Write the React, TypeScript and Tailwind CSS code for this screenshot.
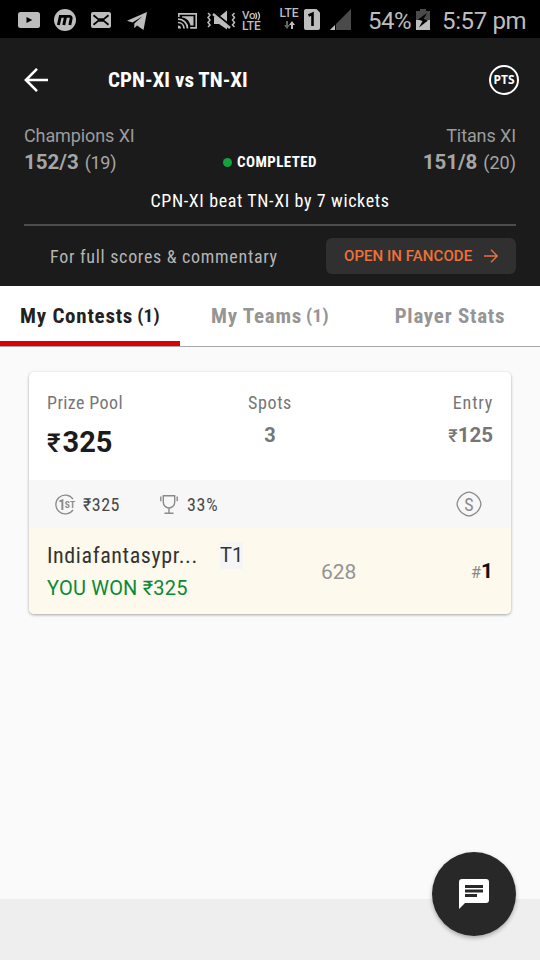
import React from 'react';
import clsx from 'clsx';

const tabs = [
  { label: 'My Contests', count: 1 },
  { label: 'My Teams', count: 1 },
  { label: 'Player Stats' }
];

function StatusBar() {
  return (
    <div className="flex h-[38px] items-start bg-black pl-[18px] text-[#bdbdbd]">
      <svg className="mt-3 h-4 w-[22px]" viewBox="0 0 22 16">
        <rect width="22" height="16" rx="2.5" fill="currentColor" />
        <path d="M8.5 5v6l5.8-3z" fill="#000" />
      </svg>
      <svg className="ml-[14px] mt-[9px] h-[22px] w-[22px]" viewBox="0 0 22 22">
        <circle cx="11" cy="11" r="11" fill="currentColor" />
        <path d="M4.4 16 6.3 7.4H15.3Q17.6 7.4 17.1 9.8L15.800 16M11.6 7.400 9.800 16" fill="none" stroke="#000" strokeWidth="2.9" />
      </svg>
      <svg className="ml-[15px] mt-3 h-4 w-5" viewBox="0 0 20 16">
        <rect width="20" height="16" rx="2" fill="currentColor" />
        <path d="M2.500 3.200 7.200 7.200h5.600L17.500 3.200M2.500 12.800 7.200 8.800h5.600l4.700 4" fill="none" stroke="#000" strokeWidth="1.8" />
      </svg>
      <svg className="ml-4 mt-3 h-[18px] w-5" viewBox="0 0 20 18">
        <path d="M20 0 0 8.800l5.600 1.700L15.500 4.200 7.300 11.600v4.600l2.700-2.600 6.500 4.400z" fill="currentColor" />
      </svg>
      <svg className="ml-[31px] mt-[13px] h-4 w-[19px]" viewBox="0 0 19 16" fill="none" stroke="currentColor">
        <path d="M.8 4V.9h17.400v14h-6" strokeWidth="1.6" />
        <path d="M4 3.300h11.500v9.200h-3C11.500 8 8.500 5 4 4.500z" fill="currentColor" stroke="none" />
        <path d="M0 6.200c5.500 0 9.500 4 9.500 9.300M0 9.500c3.500 0 6 2.600 6 6" strokeWidth="1.7" />
        <path d="M0 12.500a3 3 0 0 1 3 3H0z" fill="currentColor" stroke="none" />
      </svg>
      <svg className="ml-[10px] mt-[10px] h-[21px] w-[29px]" viewBox="0 0 29 21" fill="none" stroke="currentColor">
        <path d="M7 7h5l8-6.500v19L12 14H7z" fill="currentColor" stroke="none" />
        <path d="M6.500 2 24 16" stroke="#000" strokeWidth="2" />
        <path d="M6 4 23 18" strokeWidth="2.4" />
        <path d="m1 3 2 2-2 2.500 2 2.500-2 2.500 2 2.500-2 2M27.500 3l-2 2 2 2.500-2 2.500 2 2.500-2 2.500 2 2" strokeWidth="1.5" />
      </svg>
      <div className="ml-[6px] mt-[10px] w-[21px] whitespace-nowrap font-['Roboto'] text-[12px] font-medium leading-[11px]">
        <div className="flex h-[11px] items-center text-[11.5px]">
          <span className="tracking-[-0.2px]">Vo</span>
          <svg className="h-[10px] w-[6px]" viewBox="0 0 6 10" fill="none" stroke="currentColor" strokeWidth="1.4">
            <path d="M.5 2q2.200 3 0 6M3 .8q3 4.200 0 8.400" />
          </svg>
        </div>
        <div className="tracking-[-0.2px]">LTE</div>
      </div>
      <div className="ml-[16px] mt-2 w-5 text-center font-['Roboto'] text-[12px] font-medium leading-[11px]">
        LTE
        <svg className="mx-auto mt-[2px] h-2 w-[11px]" viewBox="0 0 11 8">
          <path d="M2 0h2v4h2L3 8 0 4h2z" fill="#666" />
          <path d="M7 8h2V4h2L8 0 5 4h2z" fill="currentColor" />
        </svg>
      </div>
      <svg className="ml-[5px] mt-[9px] h-[21px] w-4" viewBox="0 0 16 21">
        <path d="M2 0h10.500L16 3.500V19a2 2 0 0 1-2 2H2a2 2 0 0 1-2-2V2a2 2 0 0 1 2-2z" fill="currentColor" />
        <path d="M4.500 6.500 8.500 4.800v12.200" fill="none" stroke="#000" strokeWidth="2.6" />
      </svg>
      <svg className="ml-[10px] mt-[9px] h-[21px] w-[21px]" viewBox="0 0 21 21">
        <path d="M21 0v21H0z" fill="#4a4a4a" />
        <path d="M5 16v5H0z" fill="currentColor" />
        <path d="M5.500 15v6" stroke="#000" />
      </svg>
      <span className="ml-[17px] mt-[7px] w-[43px] whitespace-nowrap font-['Roboto'] text-[24px] leading-7 tracking-[-0.5px]">54%</span>
      <svg className="ml-[5px] mt-[9px] h-[21px] w-[14px]" viewBox="0 0 14 21">
        <path d="M4 0h6v2h4v9H0V2h4z" fill="#4a4a4a" />
        <path d="M0 11h14v10H0z" fill="currentColor" />
        <path d="M11 4 2 10.500l4.500 1.500L3 18.500l9-7-4.500-1.500z" fill="#000" />
      </svg>
      <span className="ml-[12px] mt-[7px] whitespace-nowrap font-['Roboto'] text-[24px] leading-7 tracking-[-0.35px]">5:57 pm</span>
    </div>
  );
}

function MatchHeader() {
  return (
    <header className="h-[248px] bg-[#1b1b1b] px-6 text-white">
      <div className="flex h-[84px] items-center">
        <svg className="h-6 w-6" viewBox="0 0 24 24" fill="none" stroke="currentColor" strokeWidth="2.6">
          <path d="M24 12H2M13 .9 1.900 12 13 23.100" />
        </svg>
        <h1 className="ml-[60px] pt-px text-[21px] font-bold tracking-[0.05px] [font-stretch:75%]">CPN-XI vs TN-XI</h1>
        <div className="-mr-[3px] ml-auto flex h-[30px] w-[30px] items-center justify-center rounded-full border-2 border-white font-['Noto_Sans'] text-[12px] font-bold leading-none">
          PTS
        </div>
      </div>

      <div className="flex h-[26px] items-center justify-between text-[18px] tracking-[-0.1px] text-[#9c9c9c]">
        <span>Champions XI</span>
        <span>Titans XI</span>
      </div>
      <div className="flex h-7 items-center justify-between text-[#a6a6a6]">
        <div className="flex w-[110px] items-baseline whitespace-nowrap">
          <span className="text-[20.5px] font-bold">152/3</span>
          <span className="ml-[6px] text-[18px] tracking-[-0.3px]">(19)</span>
        </div>
        <div className="flex items-center pt-px text-[15px] font-bold text-white">
          <span className="mr-[5px] h-[9px] w-[9px] rounded-full bg-[#12a33b]" />
          <span className="tracking-[0.4px] [font-stretch:75%]">COMPLETED</span>
        </div>
        <div className="flex w-[110px] items-baseline justify-end whitespace-nowrap">
          <span className="text-[20.5px] font-bold">151/8</span>
          <span className="ml-[6px] text-[18px]">(20)</span>
        </div>
      </div>
      <p className="mt-3 h-[26px] text-center text-[18px] leading-[26px] tracking-[0.62px] [font-stretch:75%]">CPN-XI beat TN-XI by 7 wickets</p>

      <div className="mt-[10px] flex h-[50px] items-end border-t-2 border-[#4d4d4d]">
        <span className="ml-[26px] h-[35px] text-[18px] leading-[35px] tracking-[0.7px] text-[#b5b5b5] [font-stretch:75%]">For full scores & commentary</span>
        <button className="ml-auto flex h-9 w-[190px] items-center rounded-[6px] bg-[#303030] pl-[18px] text-[15px] font-medium tracking-[0.06px] text-[#ee7139]">
          OPEN IN FANCODE
          <svg className="ml-3 h-[14px] w-[14px]" viewBox="0 0 14 14" fill="none" stroke="currentColor" strokeWidth="1.4">
            <path d="M0 7h13M7 .7 13.300 7 7 13.300" />
          </svg>
        </button>
      </div>
    </header>
  );
}

function ContestCard() {
  return (
    <section className="overflow-hidden rounded-[5px] bg-white shadow-[0_1px_3px_rgba(0,0,0,0.35)]">
      <div className="flex h-[108px] justify-between px-[18px] pt-[18px] text-[#767676]">
        <div className="w-[120px]">
          <p className="text-[18px] leading-[26px] tracking-[0.4px] [font-stretch:75%]">Prize Pool</p>
          <p className="mt-1 flex items-baseline text-[29px] font-bold leading-[44px] text-[#1b1b1b]">
            <span className="mr-[2px] text-[26px] font-medium">₹</span>325
          </p>
        </div>
        <div className="w-[120px] text-center">
          <p className="text-[18px] leading-[26px] tracking-[0.6px] [font-stretch:75%]">Spots</p>
          <p className="mt-[5px] text-[20px] font-bold leading-7">3</p>
        </div>
        <div className="w-[120px] text-right">
          <p className="text-[18px] leading-[26px] tracking-[0.8px] [font-stretch:75%]">Entry</p>
          <p className="mt-[5px] text-[20.5px] font-bold leading-7"><span className="text-[18px] font-medium">₹</span>125</p>
        </div>
      </div>

      <div className="flex h-12 items-center bg-[#f7f7f7] px-[26px] text-[18px] text-[#484848] [font-stretch:75%]">
        <svg className="h-[21px] w-[21px] text-[#8a8a8a]" viewBox="0 0 21 21" fill="none" stroke="currentColor">
          <path d="M18 5.200a9.400 9.400 0 1 0 0 10.600" strokeWidth="1.3" />
          <text x="3.3" y="15.6" fontSize="14.5" fontWeight="600" fill="currentColor" stroke="none">1</text>
          <text x="9.8" y="14" fontSize="9.5" fontWeight="700" fill="currentColor" stroke="none">ST</text>
        </svg>
        <span className="ml-[7px] w-[38px] tracking-[0.5px]">₹325</span>
        <svg className="ml-[39px] h-[19px] w-[18px] text-[#8a8a8a]" viewBox="0 0 18 19" fill="none" stroke="currentColor" strokeWidth="1.4">
          <path d="M3.300.8h11.400v6.500a5.700 5.700 0 0 1-11.400 0zM9 13v5M4.500 18.200h9M.8 1.500v4.800M17.200 1.500v4.800" />
        </svg>
        <span className="ml-[9px] tracking-[0.7px]">33%</span>
        <svg className="ml-auto mr-[3px] h-[26px] w-[26px] text-[#8a8a8a]" viewBox="0 0 26 26" fill="none" stroke="currentColor">
          <path d="M9.800 1.900Q13 .3 16.200 1.900 21.800 4.200 24.100 9.800 25.700 13 24.100 16.200 21.800 21.800 16.200 24.100 13 25.700 9.800 24.100 4.200 21.800 1.900 16.200.3 13 1.900 9.800 4.200 4.200 9.800 1.900z" strokeWidth="1.3" />
          <text x="13" y="19.5" textAnchor="middle" fontSize="18" fill="currentColor" stroke="none">S</text>
        </svg>
      </div>

      <div className="flex h-[86px] items-center bg-[#fef9ed] px-[18px]">
        <div className="w-[230px] whitespace-nowrap pt-[2px]">
          <div className="flex h-8 items-center text-[22px] text-[#333]">
            <span className="w-[173px] tracking-[0.6px] [font-stretch:75%]">Indiafantasypr...</span>
            <span className="h-[27px] bg-[#f5f5f5] text-[20px] leading-[27px]">T1</span>
          </div>
          <p className="h-[34px] text-[20px] leading-[34px] tracking-[0.2px] text-[#0a8a35]">YOU WON ₹325</p>
        </div>
        <span className="ml-[44px] pt-[3px] text-[21px] text-[#949494]">628</span>
        <span className="ml-auto pt-[2px] text-[16px] text-[#888]">#<b className="text-[21px] text-[#111]">1</b></span>
      </div>
    </section>
  );
}

function App() {
  return (
    <div className="relative flex h-[960px] w-[540px] flex-col overflow-hidden bg-[#fafafa] font-['Roboto',sans-serif]">
      <StatusBar />
      <MatchHeader />

      <nav className="flex h-[61px] border-b border-[#a8a8a8] bg-white">
        {tabs.map((tab, i) => (
          <button
            key={tab.label}
            className={clsx(
              'flex w-[180px] items-center justify-center whitespace-nowrap border-b-[5px] pt-[6px] text-[21px] font-bold [font-stretch:75%]',
              i === 0 ? 'border-[#dc0000] text-[#222]' : 'border-transparent text-[#959595]'
            )}
          >
            <span className="tracking-[0.75px]">{tab.label}</span>
            {tab.count && <span className="ml-1 text-[19px] tracking-[0.3px]">({tab.count})</span>}
          </button>
        ))}
      </nav>

      <main className="grow px-[29px] pt-[25px]">
        <ContestCard />
      </main>
      <footer className="h-[61px] bg-[#eee]" />

      <button className="absolute bottom-6 right-6 flex h-[84px] w-[84px] items-center justify-center rounded-full bg-[#282828] shadow-[0_2px_4px_rgba(0,0,0,0.3)]">
        <svg className="h-[30px] w-[30px]" viewBox="0 0 30 30">
          <path d="M3 0h24a3 3 0 0 1 3 3v18a3 3 0 0 1-3 3H6l-6 6V3a3 3 0 0 1 3-3z" fill="#fff" />
          <path d="M6 6h18v3H6zM6 10.500h18v3H6zM6 15h12v3H6z" fill="#282828" />
        </svg>
      </button>
    </div>
  );
}

export default App;
